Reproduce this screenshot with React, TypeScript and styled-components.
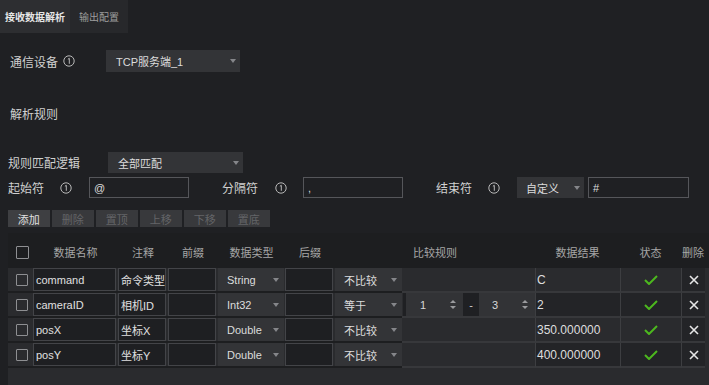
import React from "react";
import styled, { createGlobalStyle } from "styled-components";

const GlobalStyle = createGlobalStyle`
  html, body {
    margin: 0;
    padding: 0;
    background: #1f2023;
  }
  body {
    font-family: "Liberation Sans", "Noto Sans CJK SC", sans-serif;
  }
  #root {
    width: 709px;
    height: 385px;
    overflow: hidden;
  }
`;

const COLS = "25px 85px 50px 50px 67px 50px 67px 133px 85px 61px 24px";

const Page = styled.div`
  width: 709px;
  height: 385px;
  display: flex;
  flex-direction: column;
  background: #1f2023;
  color: #d2d2d2;
`;

const TabBar = styled.div`
  display: flex;
  height: 33px;
  flex-shrink: 0;
`;

const Tab = styled.div<{ $active?: boolean }>`
  display: flex;
  align-items: center;
  padding: 0 ${(p) => (p.$active ? "5px" : "9px")};
  font-size: 10px;
  font-weight: ${(p) => (p.$active ? "bold" : "normal")};
  background: ${(p) => (p.$active ? "#2d2e31" : "#27282b")};
  color: ${(p) => (p.$active ? "#e6e6e6" : "#9d9d9d")};
`;

const Content = styled.div`
  flex: 1;
  display: flex;
  flex-direction: column;
  padding-left: 8px;
  min-height: 0;
`;

const FormRow = styled.div<{ $top: number; $h: number }>`
  display: flex;
  align-items: center;
  margin-top: ${(p) => p.$top}px;
  height: ${(p) => p.$h}px;
  flex-shrink: 0;
`;

const Label = styled.div<{ $w: number; $indent?: number }>`
  width: ${(p) => p.$w}px;
  padding-left: ${(p) => p.$indent || 0}px;
  box-sizing: border-box;
  display: flex;
  align-items: center;
  gap: 5px;
  font-size: 12px;
  color: #d0d0d0;
  flex-shrink: 0;
`;

const SectionTitle = styled.div`
  margin-top: 35px;
  padding-left: 2px;
  font-size: 12px;
  line-height: 16px;
  color: #d0d0d0;
`;

const InfoBox = styled.div<{ $w: number }>`
  width: ${(p) => p.$w}px;
  display: flex;
  align-items: center;
  flex-shrink: 0;
`;

const Select = styled.div<{ $w: number; $h: number; $pad?: number }>`
  width: ${(p) => p.$w}px;
  height: ${(p) => p.$h}px;
  box-sizing: border-box;
  padding: 0 4px 0 ${(p) => p.$pad ?? 10}px;
  background: #333437;
  display: flex;
  align-items: center;
  justify-content: space-between;
  font-size: 11px;
  color: #dcdcdc;
  flex-shrink: 0;
`;

const Arrow = styled.span`
  width: 0;
  height: 0;
  border-left: 3px solid transparent;
  border-right: 3px solid transparent;
  border-top: 4px solid #85868a;
`;

const TextInput = styled.div<{ $w: number }>`
  width: ${(p) => p.$w}px;
  height: 21px;
  box-sizing: border-box;
  border: 1px solid #55565a;
  padding-left: 4px;
  display: flex;
  align-items: center;
  font-size: 11px;
  color: #dcdcdc;
  flex-shrink: 0;
`;

const DelimRow = styled.div`
  display: flex;
  align-items: center;
  gap: 33px;
  margin-top: 4px;
  height: 21px;
  flex-shrink: 0;
`;

const DelimGroup = styled.div`
  display: flex;
  align-items: center;
`;

const Toolbar = styled.div`
  display: flex;
  gap: 2.5px;
  margin-top: 12px;
  height: 17px;
  flex-shrink: 0;
`;

const ToolButton = styled.div<{ $disabled?: boolean }>`
  width: 41.5px;
  height: 17px;
  display: flex;
  align-items: center;
  justify-content: center;
  font-size: 11px;
  background: ${(p) => (p.$disabled ? "#38393c" : "#3e3f42")};
  color: ${(p) => (p.$disabled ? "#646568" : "#e0e0e0")};
`;

const Table = styled.div`
  margin-top: 6px;
  flex: 1;
  display: flex;
  flex-direction: column;
  background: #2a2b2e;
  min-height: 0;
`;

const HeaderRow = styled.div`
  display: grid;
  grid-template-columns: ${COLS};
  height: 35px;
  background: #1d1e20;
  flex-shrink: 0;
`;

const HeaderCell = styled.div<{ $span?: number; $start?: boolean }>`
  grid-column: span ${(p) => p.$span || 1};
  display: flex;
  align-items: center;
  justify-content: ${(p) => (p.$start ? "flex-start" : "center")};
  font-size: 11px;
  color: #a6a6a6;
  padding-top: 3px;
`;

const DataRow = styled.div`
  display: grid;
  grid-template-columns: ${COLS};
  height: 25px;
`;

const Cell = styled.div<{ $bg?: string; $sep?: string; $line?: boolean }>`
  height: 25px;
  box-sizing: border-box;
  background: ${(p) => p.$bg || "#2a2b2e"};
  border-bottom: 2px solid ${(p) => p.$sep || "#1d1e20"};
  border-left: ${(p) => (p.$line ? "1px solid #3d3e41" : "none")};
  display: flex;
  align-items: center;
  min-width: 0;
`;

const CheckBox = styled.div<{ $size: number }>`
  width: ${(p) => p.$size}px;
  height: ${(p) => p.$size}px;
  box-sizing: border-box;
  border: 1px solid #8e8f92;
  border-radius: 1px;
  margin-left: 8px;
`;

const CellInput = styled.div<{ $mr: number }>`
  flex: 1;
  height: 100%;
  margin-right: ${(p) => p.$mr}px;
  box-sizing: border-box;
  border: 1px solid #434448;
  background: #1e1f22;
  padding-left: 2px;
  display: flex;
  align-items: center;
  font-size: 11px;
  color: #e0e0e0;
  white-space: nowrap;
  overflow: hidden;
`;

const CellSelect = styled.div<{ $mr: number }>`
  flex: 1;
  height: 100%;
  margin-right: ${(p) => p.$mr}px;
  background: #333437;
  padding: 0 5px 0 9px;
  display: flex;
  align-items: center;
  justify-content: space-between;
  font-size: 11px;
  color: #dcdcdc;
`;

const RangeWrap = styled.div`
  flex: 1;
  height: 100%;
  display: flex;
  padding-left: 1px;
`;

const Spinner = styled.div<{ $w: number; $edge?: boolean }>`
  width: ${(p) => p.$w}px;
  height: 100%;
  box-sizing: border-box;
  background: #323336;
  border-left: ${(p) => (p.$edge ? "3px solid #1f2023" : "none")};
  padding: 0 7px 0 ${(p) => (p.$edge ? 14 : 13)}px;
  display: flex;
  align-items: center;
  justify-content: space-between;
  font-size: 11px;
  color: #d8d8d8;
`;

const SpinArrows = styled.div`
  display: flex;
  flex-direction: column;
  gap: 3px;
  span {
    width: 0;
    height: 0;
    border-left: 3px solid transparent;
    border-right: 3px solid transparent;
  }
  span:first-child {
    border-bottom: 3px solid #9a9b9e;
  }
  span:last-child {
    border-top: 3px solid #9a9b9e;
  }
`;

const Dash = styled.div`
  width: 16px;
  height: 100%;
  background: #1f2023;
  display: flex;
  align-items: center;
  justify-content: center;
  font-size: 11px;
  color: #d0d0d0;
`;

const ResultText = styled.div`
  padding-left: 1px;
  font-size: 12px;
  color: #dedede;
`;

const Center = styled.div`
  flex: 1;
  display: flex;
  align-items: center;
  justify-content: center;
`;

const RowsArea = styled.div`
  display: flex;
  flex-direction: column;
`;

const InfoIcon = () => (
  <svg width="12" height="12" viewBox="0 0 12 12">
    <circle cx="6" cy="6" r="5.2" fill="none" stroke="#b8b8b8" strokeWidth="1" />
    <path d="M4.9 4.3 L6.3 3.3 V8.8" fill="none" stroke="#b8b8b8" strokeWidth="1" />
  </svg>
);

const CheckIcon = () => (
  <svg width="14" height="10" viewBox="0 0 14 10">
    <polyline points="1,5 5,9 13,1" fill="none" stroke="#4cb81e" strokeWidth="2" />
  </svg>
);

const CloseIcon = () => (
  <svg width="10" height="10" viewBox="0 0 10 10">
    <path d="M1 1 L9 9 M9 1 L1 9" stroke="#e6e6e6" strokeWidth="1.6" />
  </svg>
);

type Rule = { kind: "none" } | { kind: "eq"; from: string; to: string };

const rows: {
  name: string;
  note: string;
  type: string;
  compare: string;
  rule: Rule;
  result: string;
}[] = [
  { name: "command", note: "命令类型", type: "String", compare: "不比较", rule: { kind: "none" }, result: "C" },
  { name: "cameraID", note: "相机ID", type: "Int32", compare: "等于", rule: { kind: "eq", from: "1", to: "3" }, result: "2" },
  { name: "posX", note: "坐标X", type: "Double", compare: "不比较", rule: { kind: "none" }, result: "350.000000" },
  { name: "posY", note: "坐标Y", type: "Double", compare: "不比较", rule: { kind: "none" }, result: "400.000000" },
];

const App = () => {
  return (
    <Page>
      <GlobalStyle />
      <TabBar>
        <Tab $active>接收数据解析</Tab>
        <Tab>输出配置</Tab>
      </TabBar>
      <Content>
        <FormRow $top={17} $h={22}>
          <Label $w={98} $indent={2}>
            通信设备 <InfoIcon />
          </Label>
          <Select $w={134} $h={22}>
            TCP服务端_1
            <Arrow />
          </Select>
        </FormRow>
        <SectionTitle>解析规则</SectionTitle>
        <FormRow $top={29} $h={21}>
          <Label $w={100}>规则匹配逻辑</Label>
          <Select $w={135} $h={21}>
            全部匹配
            <Arrow />
          </Select>
        </FormRow>
        <DelimRow>
          <DelimGroup>
            <Label $w={52}>起始符</Label>
            <InfoBox $w={29}>
              <InfoIcon />
            </InfoBox>
            <TextInput $w={100}>@</TextInput>
          </DelimGroup>
          <DelimGroup>
            <Label $w={53}>分隔符</Label>
            <InfoBox $w={28}>
              <InfoIcon />
            </InfoBox>
            <TextInput $w={100}>,</TextInput>
          </DelimGroup>
          <DelimGroup>
            <Label $w={52}>结束符</Label>
            <InfoBox $w={29}>
              <InfoIcon />
            </InfoBox>
            <Select $w={67} $h={21} $pad={9}>
              自定义
              <Arrow />
            </Select>
            <InfoBox $w={4} />
            <TextInput $w={101}>#</TextInput>
          </DelimGroup>
        </DelimRow>
        <Toolbar>
          <ToolButton>添加</ToolButton>
          <ToolButton $disabled>删除</ToolButton>
          <ToolButton $disabled>置顶</ToolButton>
          <ToolButton $disabled>上移</ToolButton>
          <ToolButton $disabled>下移</ToolButton>
          <ToolButton $disabled>置底</ToolButton>
        </Toolbar>
        <Table>
          <HeaderRow>
            <HeaderCell $start>
              <CheckBox $size={13} />
            </HeaderCell>
            <HeaderCell>数据名称</HeaderCell>
            <HeaderCell>注释</HeaderCell>
            <HeaderCell>前缀</HeaderCell>
            <HeaderCell>数据类型</HeaderCell>
            <HeaderCell>后缀</HeaderCell>
            <HeaderCell $span={2}>比较规则</HeaderCell>
            <HeaderCell>数据结果</HeaderCell>
            <HeaderCell>状态</HeaderCell>
            <HeaderCell>删除</HeaderCell>
          </HeaderRow>
          <RowsArea>
            {rows.map((r, i) => {
              const shade = i % 2 === 1 ? "#232427" : "#2a2b2e";
              return (
                <DataRow key={r.name}>
                  <Cell>
                    <CheckBox $size={12} />
                  </Cell>
                  <Cell>
                    <CellInput $mr={2}>{r.name}</CellInput>
                  </Cell>
                  <Cell>
                    <CellInput $mr={2}>{r.note}</CellInput>
                  </Cell>
                  <Cell>
                    <CellInput $mr={2} />
                  </Cell>
                  <Cell>
                    <CellSelect $mr={1}>
                      {r.type}
                      <Arrow />
                    </CellSelect>
                  </Cell>
                  <Cell>
                    <CellInput $mr={2} />
                  </Cell>
                  <Cell>
                    <CellSelect $mr={0}>
                      {r.compare}
                      <Arrow />
                    </CellSelect>
                  </Cell>
                  <Cell $sep="#37383b">
                    {r.rule.kind === "eq" && (
                      <RangeWrap>
                        <Spinner $w={60} $edge>
                          {r.rule.from}
                          <SpinArrows>
                            <span />
                            <span />
                          </SpinArrows>
                        </Spinner>
                        <Dash>-</Dash>
                        <Spinner $w={56}>
                          {r.rule.to}
                          <SpinArrows>
                            <span />
                            <span />
                          </SpinArrows>
                        </Spinner>
                      </RangeWrap>
                    )}
                  </Cell>
                  <Cell $line $bg={shade} $sep="#37383b">
                    <ResultText>{r.result}</ResultText>
                  </Cell>
                  <Cell $line $bg={shade} $sep="#37383b">
                    <Center>
                      <CheckIcon />
                    </Center>
                  </Cell>
                  <Cell $line $bg="#232427" $sep="#37383b">
                    <Center>
                      <CloseIcon />
                    </Center>
                  </Cell>
                </DataRow>
              );
            })}
          </RowsArea>
        </Table>
      </Content>
    </Page>
  );
};

export default App;
